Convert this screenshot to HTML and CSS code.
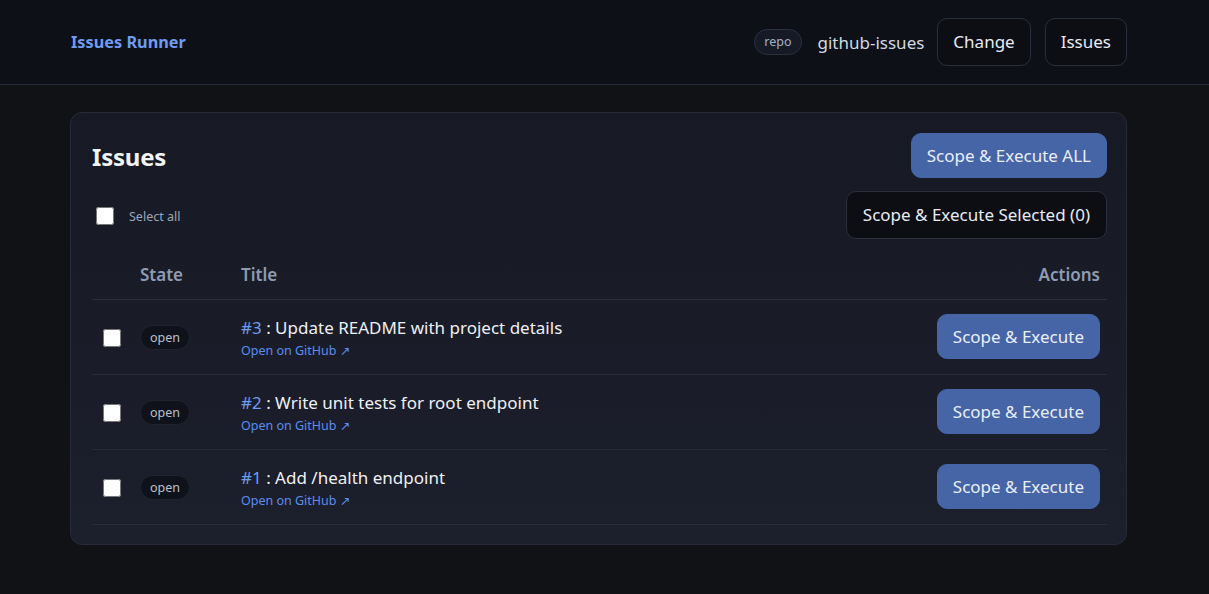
FILE: index.html
```html
<!DOCTYPE html>
<html lang="en">
<head>
<meta charset="utf-8">
<title>Issues Runner</title>
<link rel="stylesheet" href="styles.css">
</head>
<body>
<header class="topbar">
  <div class="wrap topbar-inner">
    <a class="brand" href="#">Issues Runner</a>
    <div class="top-actions">
      <span class="pill">repo</span>
      <span class="repo-name">github-issues</span>
      <button class="btn btn-dark">Change</button>
      <button class="btn btn-dark">Issues</button>
    </div>
  </div>
</header>
<main class="wrap">
  <section class="card">
    <div class="card-head">
      <h1 class="card-title">Issues</h1>
      <button class="btn btn-primary">Scope &amp; Execute ALL</button>
    </div>
    <div class="select-row">
      <label class="select-all"><input type="checkbox" class="cb"> <span>Select all</span></label>
      <button class="btn btn-dark">Scope &amp; Execute Selected (0)</button>
    </div>
    <table class="issues">
      <thead>
        <tr>
          <th class="col-cb"></th>
          <th class="col-state">State</th>
          <th class="col-title">Title</th>
          <th class="col-actions">Actions</th>
        </tr>
      </thead>
      <tbody>
        <tr>
          <td class="col-cb"><input type="checkbox" class="cb"></td>
          <td class="col-state"><span class="state">open</span></td>
          <td class="col-title">
            <div class="issue-title"><span class="num">#3</span> : Update README with project details</div>
            <a class="gh-link" href="#">Open on GitHub ↗</a>
          </td>
          <td class="col-actions"><button class="btn btn-primary">Scope &amp; Execute</button></td>
        </tr>
        <tr>
          <td class="col-cb"><input type="checkbox" class="cb"></td>
          <td class="col-state"><span class="state">open</span></td>
          <td class="col-title">
            <div class="issue-title"><span class="num">#2</span> : Write unit tests for root endpoint</div>
            <a class="gh-link" href="#">Open on GitHub ↗</a>
          </td>
          <td class="col-actions"><button class="btn btn-primary">Scope &amp; Execute</button></td>
        </tr>
        <tr>
          <td class="col-cb"><input type="checkbox" class="cb"></td>
          <td class="col-state"><span class="state">open</span></td>
          <td class="col-title">
            <div class="issue-title"><span class="num">#1</span> : Add /health endpoint</div>
            <a class="gh-link" href="#">Open on GitHub ↗</a>
          </td>
          <td class="col-actions"><button class="btn btn-primary">Scope &amp; Execute</button></td>
        </tr>
      </tbody>
    </table>
  </section>
</main>
</body>
</html>
```

FILE: styles.css
```css
* { box-sizing: border-box; }
html, body {
  margin: 0;
  padding: 0;
}
body {
  background: #111215;
  color: #e6e8ee;
  font-family: "Noto Sans", "Open Sans", "DejaVu Sans", sans-serif;
  font-size: 16px;
}
.wrap {
  margin-left: 70px;
  width: 1057px;
}
.topbar {
  background: #0d1017;
  border-bottom: 1px solid #252a35;
  height: 85px;
}
.topbar-inner {
  height: 84px;
  display: flex;
  align-items: center;
  justify-content: space-between;
}
.brand {
  color: #6f9cf0;
  font-weight: 700;
  font-size: 16.3px;
  text-decoration: none;
  margin-left: 1px;
}
.top-actions {
  display: flex;
  align-items: center;
}
.pill {
  font-size: 12.5px;
  color: #a7b0c0;
  border: 1px solid #2a3040;
  background: #151a26;
  border-radius: 999px;
  padding: 2px 9px 3px;
  line-height: 19px;
  margin-right: 16px;
}
.repo-name {
  font-size: 17px;
  color: #d4d8e0;
  margin-right: 13px;
}
.btn {
  font-family: inherit;
  font-size: 17px;
  border-radius: 10px;
  cursor: pointer;
  line-height: 24px;
}
.btn-dark {
  background: #0c0e13;
  color: #e8ebf2;
  border: 1px solid #2a2f3b;
  height: 48px;
  padding: 0 16px;
}
.top-actions .btn-dark { padding: 0 15px; }
.top-actions .btn + .btn { margin-left: 14px; }
.btn-primary {
  background: #4565a6;
  color: #e9eefa;
  border: 1px solid #4565a6;
  height: 45px;
  padding: 0 15px;
}
main.wrap {
  padding-top: 27px;
}
.card {
  border: 1px solid #262b37;
  border-radius: 12px;
  background: linear-gradient(180deg, #171a24 0%, #1c1f2c 100%);
  padding: 20px 19px 19px 21px;
}
.card-head {
  display: flex;
  justify-content: space-between;
  align-items: center;
}
.card-title {
  margin: 2px 0 0;
  font-size: 24px;
  font-weight: 700;
  color: #f1f3f7;
  letter-spacing: -0.2px;
}
.select-row {
  margin-top: 13px;
  display: flex;
  justify-content: space-between;
  align-items: center;
}
.select-all {
  display: flex;
  align-items: center;
  font-size: 12.5px;
  color: #9aa6ba;
  padding-top: 2px;
}
.select-all .cb { margin: 0 15px 0 4px; }
.cb {
  display: block;
  width: 18px;
  height: 18px;
  margin: 0;
  accent-color: #4565a6;
}
.issues {
  width: 100%;
  border-collapse: collapse;
  margin-top: 12px;
}
.issues th {
  text-align: left;
  font-size: 17px;
  font-weight: 600;
  color: #8e9bb1;
  padding: 12px 8px;
  line-height: 24px;
  border-bottom: 1px solid #2a2f3b;
}
.issues td {
  padding: 14px 8px 15px;
  border-bottom: 1px solid #272c38;
  vertical-align: middle;
}
.issues .col-cb { width: 40px; padding-left: 11px; }
.issues td.col-cb .cb { margin-top: 3px; }
.issues .col-state { width: 101px; }
.issues th.col-actions, .issues td.col-actions { text-align: right; padding-right: 7px; }
.issues td.col-actions { font-size: 0; line-height: 0; }
.issues td.col-actions .btn { display: inline-block; vertical-align: top; }
.state {
  display: inline-block;
  font-size: 12.5px;
  color: #b9c0cd;
  background: #0f121a;
  border: 1px solid #1f2430;
  border-radius: 999px;
  padding: 2px 9px 2px;
  line-height: 19px;
  margin-top: 2px;
}
.issues td.col-title { padding-top: 16px; padding-bottom: 14px; }
.issue-title {
  font-size: 17px;
  color: #eef0f4;
  line-height: 22px;
}
.num { color: #6f9cf0; }
.gh-link {
  display: block;
  font-size: 12.5px;
  color: #5b8def;
  text-decoration: none;
  line-height: 18px;
  margin-top: 3px;
}
```
